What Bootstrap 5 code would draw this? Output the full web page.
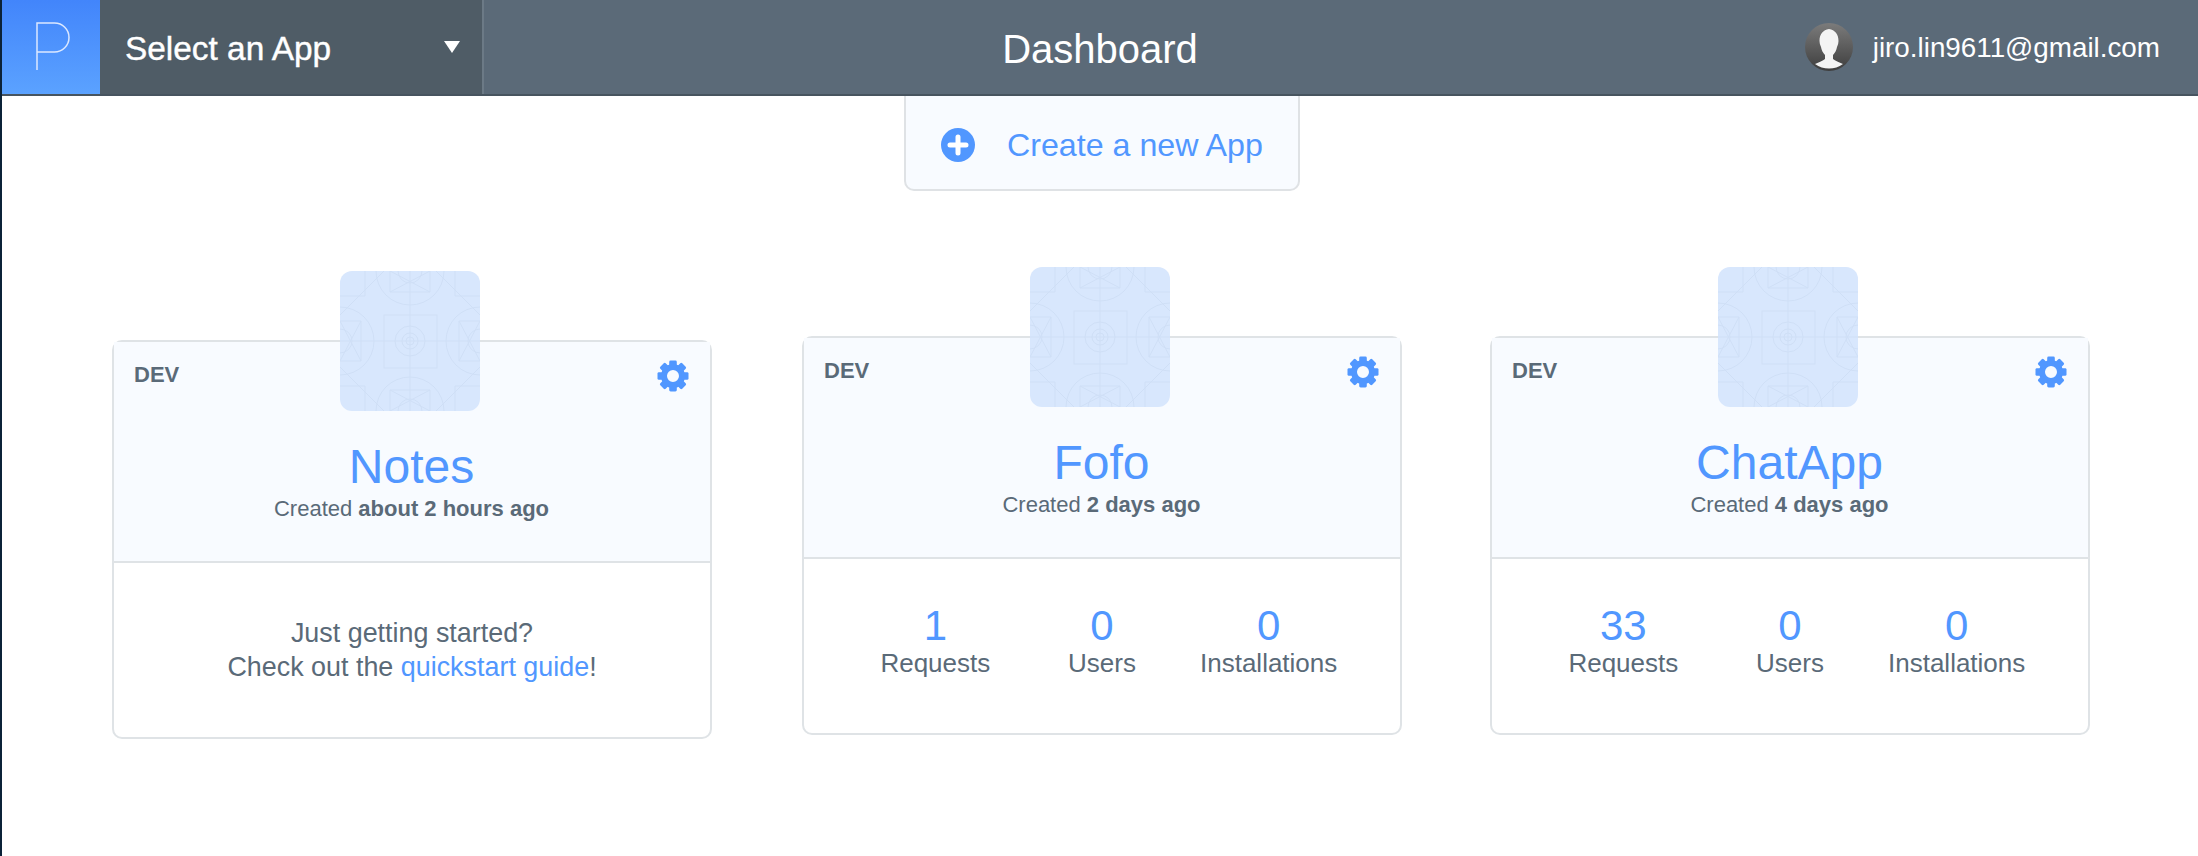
<!DOCTYPE html>
<html lang="en">
<head>
  <meta charset="UTF-8">
  <meta name="viewport" content="width=device-width, initial-scale=1.0">
  <title>Dashboard</title>
  <link href="https://cdn.jsdelivr.net/npm/bootstrap@5.3.2/dist/css/bootstrap.min.css" rel="stylesheet">
  <script defer src="https://cdn.jsdelivr.net/npm/bootstrap@5.3.2/dist/js/bootstrap.bundle.min.js"></script>
  <style>
    body {
      font-family: "Liberation Sans", Arial, sans-serif;
      color: #5a6a78;
      background: #fff;
      border-left: 2px solid #0b2238;
      min-height: 856px;
      overflow: hidden;
    }
    .top-bar {
      display: grid;
      grid-template-columns: 1fr auto 1fr;
      height: 96px;
      background: #5b6a78;
      border-bottom: 2px solid #47545f;
      color: #fff;
    }
    .logo-box {
      width: 98px;
      background: linear-gradient(#4285fb, #5ba2ff);
    }
    .app-select {
      width: 384px;
      height: 94px;
      padding: 4px 22px 0 25px;
      font-size: 33.4px;
      -webkit-text-stroke: 0.4px #fff;
      color: #fff;
      background: #4f5c66;
      border: 0;
      border-right: 2px solid #6c7a86;
      border-radius: 0;
      text-align: left;
    }
    .app-select:hover, .app-select:focus, .app-select:active { color: #fff; background: #4f5c66; }
    .app-select.dropdown-toggle::after {
      margin: -4px 0 0;
      border-top: 12px solid #fff;
      border-left: 8px solid transparent;
      border-right: 8px solid transparent;
      border-bottom: 0;
    }
    .page-title { font-size: 40px; font-weight: 400; margin: 4px 0 0; }
    .user-mail { font-size: 27.8px; margin: 2px 38px 0 20px; }
    .avatar-pic { margin-top: -1px; }
    .create-box {
      width: 396px;
      height: 95px;
      margin-left: 4px;
      padding: 5px 0 0 35px;
      gap: 32px;
      font-size: 32.2px;
      color: #5197ff;
      background: #f8fbff;
      border: 2px solid #dfe2e5;
      border-top: 0;
      border-radius: 0 0 10px 10px;
      text-decoration: none;
    }
    .apps-row {
      margin-top: 145px;
      padding-left: 110px;
      gap: 89px;
    }
    .app-card {
      width: 600px;
      height: 399px;
      border: 2px solid #dfe3e6;
      border-radius: 10px;
      background: #fff;
    }
    .app-card.lower { margin-top: 4px; }
    .app-card.middle { margin: 0 -1px 0 1px; }
    .app-card .card-header {
      height: 221px;
      padding: 21px 21px 0 20px;
      background: #f8fbff;
      border-bottom: 2px solid #dfe3e6;
    }
    .app-tile {
      width: 140px;
      height: 140px;
      top: -71px;
      margin-left: -2px;
      border-radius: 12px;
      background: #d8e7fd;
      overflow: hidden;
    }
    .gear-pic { margin-top: -3px; margin-bottom: 2px; }
    .env-tag { font-size: 22px; font-weight: 700; line-height: 24px; }
    .app-name { font-size: 48px; line-height: 56px; color: #5197ff; margin: 45px 0 0; font-weight: 400; }
    .app-age { font-size: 22px; line-height: 28px; }
    .app-age b { font-weight: 700; }
    .stats-wrap { width: 500px; margin: 0 auto; padding-top: 44px; }
    .stat-num { font-size: 42px; line-height: 45px; color: #5197ff; }
    .stat-label { font-size: 26px; line-height: 30px; }
    .start-note { font-size: 26.9px; line-height: 34px; padding: 53px 0 0; }
    .start-note a { color: #5197ff; text-decoration: none; }
  </style>
</head>
<body>
  <svg width="0" height="0" class="position-absolute">
    <defs>
      <symbol id="gear" viewBox="-16 -16 32 32">
        <circle r="9" fill="none" stroke="#5197ff" stroke-width="6"/>
        <g fill="#5197ff">
          <rect x="-3.8" y="-15.5" width="7.6" height="7" rx="1.4"/>
          <rect x="-3.8" y="-15.5" width="7.6" height="7" rx="1.4" transform="rotate(45)"/>
          <rect x="-3.8" y="-15.5" width="7.6" height="7" rx="1.4" transform="rotate(90)"/>
          <rect x="-3.8" y="-15.5" width="7.6" height="7" rx="1.4" transform="rotate(135)"/>
          <rect x="-3.8" y="-15.5" width="7.6" height="7" rx="1.4" transform="rotate(180)"/>
          <rect x="-3.8" y="-15.5" width="7.6" height="7" rx="1.4" transform="rotate(225)"/>
          <rect x="-3.8" y="-15.5" width="7.6" height="7" rx="1.4" transform="rotate(270)"/>
          <rect x="-3.8" y="-15.5" width="7.6" height="7" rx="1.4" transform="rotate(315)"/>
        </g>
      </symbol>
      <symbol id="tile" viewBox="0 0 140 140">
        <g fill="none" stroke="#cfdff6" stroke-width="1">
          <path d="M70 0V140M0 70H140"/>
          <path d="M44 0 0 44M96 0 140 44M0 96 44 140M140 96 96 140"/>
          <rect x="44" y="44" width="53" height="53"/>
          <circle cx="70" cy="70" r="15"/>
          <circle cx="70" cy="70" r="8"/>
          <circle cx="70" cy="70" r="4"/>
          <circle cx="70" cy="0" r="34"/>
          <circle cx="70" cy="140" r="34"/>
          <circle cx="0" cy="70" r="34"/>
          <circle cx="140" cy="70" r="34"/>
          <path d="M50 0V21H90V0M50 0 90 21M90 0 50 21"/>
          <path d="M50 140V119H90V140M50 140 90 119M90 140 50 119"/>
          <path d="M0 50H21V90H0M0 50 21 90M0 90 21 50"/>
          <path d="M140 50H119V90H140M140 50 119 90M140 90 119 50"/>
          <path d="M0 25H25V0M115 0V25H140M0 115H25V140M115 140V115H140"/>
          <circle cx="70" cy="0" r="12"/>
          <circle cx="70" cy="140" r="12"/>
          <circle cx="0" cy="70" r="12"/>
          <circle cx="140" cy="70" r="12"/>
        </g>
      </symbol>
      <linearGradient id="avatarBg" x1="0" y1="0" x2="0" y2="1">
        <stop offset="0" stop-color="#7b7b7b"/>
        <stop offset="1" stop-color="#3e3e3e"/>
      </linearGradient>
    </defs>
  </svg>

  <header class="top-bar">
    <div class="d-flex">
      <div class="logo-box">
        <svg width="98" height="94" viewBox="0 0 98 94" fill="none" stroke="#dbe8ff" stroke-width="1.5">
          <path d="M35 70V23H52.500a14.500 14.500 0 0 1 0 29H35"/>
        </svg>
      </div>
      <button type="button" class="btn app-select dropdown-toggle d-flex align-items-center justify-content-between">Select an App</button>
    </div>
    <h1 class="page-title align-self-center">Dashboard</h1>
    <div class="d-flex align-items-center justify-content-end">
      <svg class="avatar-pic" width="48" height="48" viewBox="0 0 48 48">
        <circle cx="24" cy="24" r="24" fill="url(#avatarBg)"/>
        <path d="M24 6c-6 1-9.500 5-9.500 12 0 2 .5 4 1.500 6 .5 3 2 6 4 8v4c-2 2-6 3-10 5a24 24 0 0 0 28 0c-4-2-8-3-10-5v-4c2-2 3.500-5 4-8 1-2 1.500-4 1.500-6 0-7-3.500-11-9.500-12z" fill="#f4f4f4"/>
      </svg>
      <span class="user-mail">jiro.lin9611@gmail.com</span>
    </div>
  </header>

  <main>
    <div class="d-flex justify-content-center">
      <a href="#" class="create-box d-flex align-items-center">
        <svg width="34" height="34" viewBox="0 0 34 34">
          <circle cx="17" cy="17" r="17" fill="#5197ff"/>
          <path d="M17 9V25M9 17H25" stroke="#fff" stroke-width="5" stroke-linecap="round"/>
        </svg>
        <span>Create a new App</span>
      </a>
    </div>

    <div class="apps-row d-flex align-items-start">
      <div class="card app-card lower">
        <svg class="app-tile position-absolute start-50 translate-middle-x"><use href="#tile"/></svg>
        <div class="card-header text-center">
          <div class="d-flex justify-content-between align-items-start">
            <span class="env-tag">DEV</span>
            <svg class="gear-pic" width="32" height="32"><use href="#gear"/></svg>
          </div>
          <h2 class="app-name">Notes</h2>
          <div class="app-age">Created <b>about 2 hours ago</b></div>
        </div>
        <div class="card-body text-center start-note">
          Just getting started?<br>
          Check out the <a href="#">quickstart guide</a>!
        </div>
      </div>

      <div class="card app-card middle">
        <svg class="app-tile position-absolute start-50 translate-middle-x"><use href="#tile"/></svg>
        <div class="card-header text-center">
          <div class="d-flex justify-content-between align-items-start">
            <span class="env-tag">DEV</span>
            <svg class="gear-pic" width="32" height="32"><use href="#gear"/></svg>
          </div>
          <h2 class="app-name">Fofo</h2>
          <div class="app-age">Created <b>2 days ago</b></div>
        </div>
        <div class="card-body p-0">
          <div class="stats-wrap row g-0 text-center">
            <div class="col-4"><div class="stat-num">1</div><div class="stat-label">Requests</div></div>
            <div class="col-4"><div class="stat-num">0</div><div class="stat-label">Users</div></div>
            <div class="col-4"><div class="stat-num">0</div><div class="stat-label">Installations</div></div>
          </div>
        </div>
      </div>

      <div class="card app-card">
        <svg class="app-tile position-absolute start-50 translate-middle-x"><use href="#tile"/></svg>
        <div class="card-header text-center">
          <div class="d-flex justify-content-between align-items-start">
            <span class="env-tag">DEV</span>
            <svg class="gear-pic" width="32" height="32"><use href="#gear"/></svg>
          </div>
          <h2 class="app-name">ChatApp</h2>
          <div class="app-age">Created <b>4 days ago</b></div>
        </div>
        <div class="card-body p-0">
          <div class="stats-wrap row g-0 text-center">
            <div class="col-4"><div class="stat-num">33</div><div class="stat-label">Requests</div></div>
            <div class="col-4"><div class="stat-num">0</div><div class="stat-label">Users</div></div>
            <div class="col-4"><div class="stat-num">0</div><div class="stat-label">Installations</div></div>
          </div>
        </div>
      </div>
    </div>
  </main>
</body>
</html>
